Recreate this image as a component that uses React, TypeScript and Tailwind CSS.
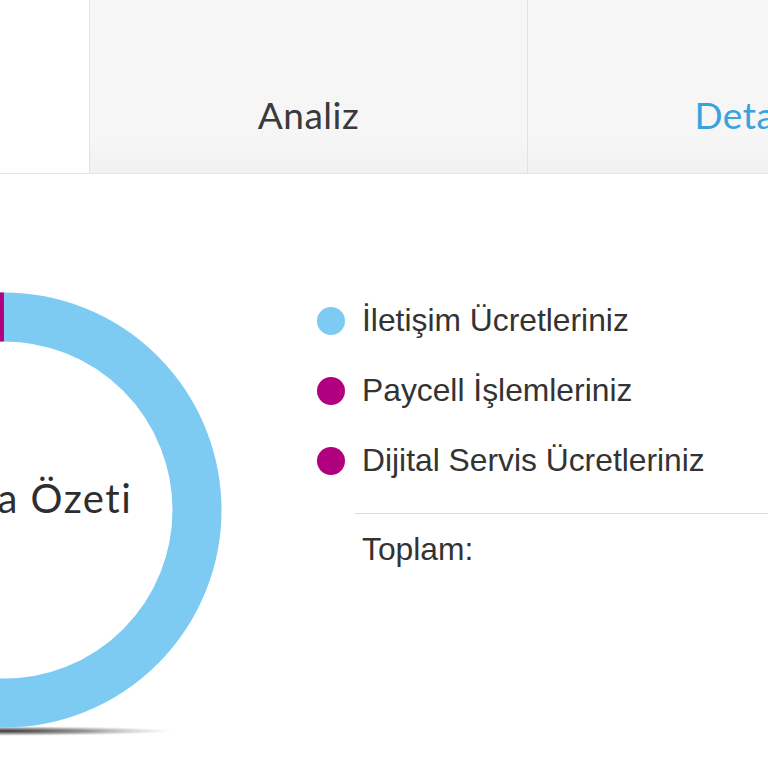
import React from "react";

const BLUE = "#7dcaf3";
const MAGENTA = "#b1007f";

const legend = [
  { label: "İletişim Ücretleriniz", color: BLUE },
  { label: "Paycell İşlemleriniz", color: MAGENTA },
  { label: "Dijital Servis Ücretleriniz", color: MAGENTA },
];

function Donut() {
  const cx = 218;
  const cy = 218;
  const r = 193;
  const c = 2 * Math.PI * r;
  const magentaLen = 5;
  return (
    <svg width="440" height="470" viewBox="0 0 440 470" className="block">
      <defs>
        <radialGradient id="floorShadow" cx="0.5" cy="0.5" r="0.5">
          <stop offset="0" stopColor="#2b2b2b" stopOpacity="0.95" />
          <stop offset="0.5" stopColor="#555" stopOpacity="0.6" />
          <stop offset="1" stopColor="#999" stopOpacity="0" />
        </radialGradient>
      </defs>
      <ellipse cx={cx} cy={439} rx={170} ry={5} fill="url(#floorShadow)" />
      <circle cx={cx} cy={cy} r={r} fill="none" stroke={BLUE} strokeWidth={49} />
      <circle
        cx={cx}
        cy={cy}
        r={r}
        fill="none"
        stroke={MAGENTA}
        strokeWidth={49}
        strokeDasharray={`${magentaLen} ${c}`}
        transform={`rotate(${-90 - (magentaLen / c) * 360} ${cx} ${cy})`}
      />
    </svg>
  );
}

export default function App() {
  return (
    <div className="w-[768px] h-[768px] overflow-hidden bg-white relative">
      <div className="h-[174px] flex border-b border-[#e4e4e4]">
        <div className="w-[89px] shrink-0 bg-white" />
        <div className="w-[438px] shrink-0 bg-gradient-to-b from-[#f6f6f6] from-80% to-[#f1f1f1] border-l border-[#e2e2e2] flex items-center justify-center pt-[56px]">
          <span className="text-[37px] tracking-[0.5px] text-[#3a3a3a] font-['Lato',sans-serif] leading-none">Analiz</span>
        </div>
        <div className="w-[476px] shrink-0 bg-gradient-to-b from-[#f6f6f6] from-80% to-[#f1f1f1] border-l border-[#e2e2e2] flex items-center justify-center pt-[56px]">
          <span className="text-[37px] tracking-[0.5px] text-[#3aa3dd] font-['Lato',sans-serif] leading-none">Detaylar</span>
        </div>
      </div>

      <div className="flex">
        <div className="relative shrink-0 w-[440px] ml-[-214px] mt-[118px]">
          <Donut />
          <div className="absolute left-0 top-0 w-[440px] h-[436px] flex items-center justify-center pb-[24px] pl-[20px]">
            <span className="text-[40px] tracking-[1.5px] text-[#2e2e2e] font-['Lato',sans-serif] whitespace-nowrap">Fatura Özeti</span>
          </div>
        </div>

        <div className="flex-1 ml-[91px] mt-[112px] font-['Liberation_Sans',Arial,sans-serif] text-[#333]">
          {legend.map((item) => (
            <div key={item.label} className="h-[70px] flex items-center">
              <span className="w-[28px] h-[28px] rounded-full shrink-0" style={{ backgroundColor: item.color }} />
              <span className="ml-[17px] text-[31.8px] leading-none whitespace-nowrap">{item.label}</span>
            </div>
          ))}
          <div className="ml-[38px] mt-[17px] border-t border-[#dedede]" />
          <div className="ml-[45px] mt-[18px] h-[36px] flex items-center text-[31.8px] leading-none">Toplam:</div>
        </div>
      </div>
    </div>
  );
}
